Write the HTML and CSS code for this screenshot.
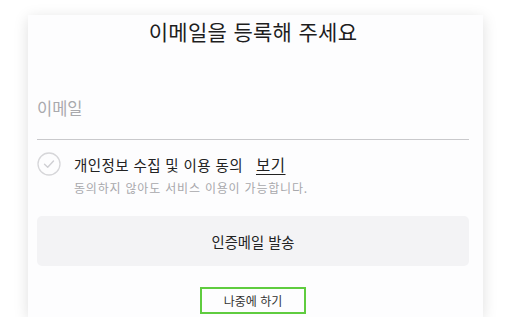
FILE: index.html
```html
<!DOCTYPE html>
<html lang="ko">
<head>
<meta charset="utf-8">
<link rel="stylesheet" href="styles.css">
</head>
<body>
<div class="page">
  <div class="card">
    <h1 class="title">이메일을 등록해 주세요</h1>
    <div class="field"><span class="placeholder">이메일</span></div>
    <div class="consent">
      <span class="check">
        <svg width="24" height="24" viewBox="0 0 24 24"><circle cx="12" cy="12" r="11" fill="none" stroke="#d6d6d9" stroke-width="1.3"/><path d="M7.5 12.3 L10.7 15.3 L16.5 9" fill="none" stroke="#cfcfd3" stroke-width="1.4" stroke-linecap="round" stroke-linejoin="round"/></svg>
      </span>
      <div class="consent-text">
        <div class="consent-main">개인정보 수집 및 이용 동의<a class="view">보기</a></div>
        <div class="consent-sub">동의하지 않아도 서비스 이용이 가능합니다.</div>
      </div>
    </div>
    <div class="send">인증메일 발송</div>
    <div class="later-wrap"><span class="later">나중에 하기</span></div>
  </div>
</div>
</body>
</html>
```
FILE: styles.css
```css
html, body {
  margin: 0;
  padding: 0;
  background: #ffffff;
}
body {
  font-family: "Noto Sans CJK KR", "Noto Sans", sans-serif;
  color: #222;
  overflow: hidden;
}
.page {
  padding: 15px 0 0 28px;
}
.card {
  width: 455px;
  height: 302px;
  box-sizing: border-box;
  padding: 0 14px 0 9px;
  background: #fdfdfe;
  box-shadow: 0 3px 14px rgba(0, 0, 0, 0.13);
  display: flex;
  flex-direction: column;
  overflow: hidden;
}
.title {
  margin: 3px 0 0;
  font-size: 21px;
  font-weight: 400;
  letter-spacing: 0.3px;
  line-height: 26px;
  text-align: center;
  color: #1e1e1e;
}
.field {
  margin-top: 54px;
  padding-bottom: 21px;
  border-bottom: 1px solid #c9c9cc;
}
.placeholder {
  display: block;
  font-size: 16.5px;
  line-height: 20px;
  color: #a9a9ad;
}
.consent {
  margin-top: 12px;
  display: flex;
  gap: 13px;
}
.check {
  width: 24px;
  height: 24px;
  flex: none;
  display: flex;
}
.consent-main {
  font-size: 14.5px;
  letter-spacing: 0.4px;
  line-height: 24px;
  color: #222;
}
.view {
  margin-left: 13px;
  text-decoration: underline;
  text-underline-offset: 3px;
  color: #222;
  font-size: 15.5px;
  letter-spacing: 0.5px;
}
.consent-sub {
  margin-top: 3px;
  font-size: 12px;
  letter-spacing: 0.8px;
  line-height: 16px;
  color: #a8a8ac;
}
.send {
  margin-top: 20px;
  height: 50px;
  border-radius: 5px;
  background: #f3f3f5;
  display: flex;
  align-items: center;
  justify-content: center;
  font-size: 14.3px;
  color: #222;
}
.later-wrap {
  margin-top: 21px;
  display: flex;
  justify-content: center;
}
.later {
  width: 106px;
  height: 27px;
  box-sizing: border-box;
  border: 2px solid #5fcc3f;
  display: flex;
  align-items: center;
  justify-content: center;
  font-size: 12px;
  color: #333;
}
```
